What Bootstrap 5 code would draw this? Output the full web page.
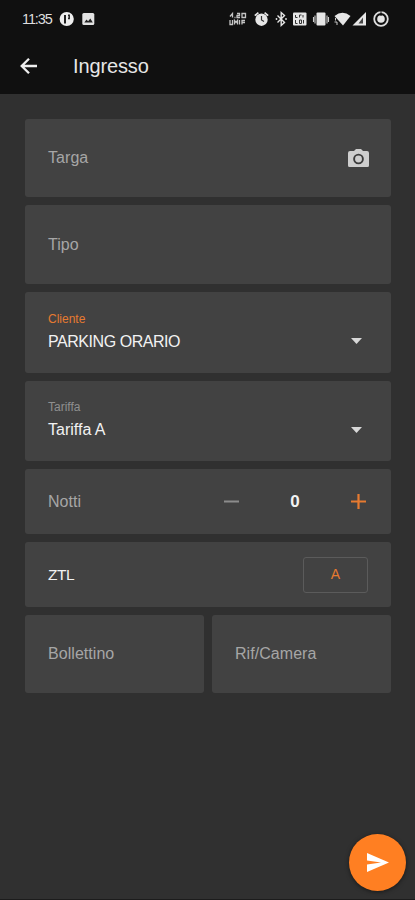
<!DOCTYPE html>
<html lang="it">
<head>
<meta charset="utf-8">
<meta name="viewport" content="width=device-width, initial-scale=1">
<title>Ingresso</title>
<link href="https://cdn.jsdelivr.net/npm/bootstrap@5.3.0/dist/css/bootstrap.min.css" rel="stylesheet">
<style>
  body { background: #303030; color: #f2f2f2; font-family: "Liberation Sans", Arial, sans-serif; font-size: 16px; line-height: 20px; height: 900px; overflow: hidden; border-bottom: 1px solid #1c1c1c; }
  svg { display: block; flex: none; }
  .topbar { background: #101010; height: 94px; }
  .status { height: 38px; padding: 0 26px 0 22px; }
  .clock { font-size: 14.5px; letter-spacing: -1.1px; width: 37px; color: #dedede; }
  .appbar { height: 56px; padding-left: 17px; }
  .title { font-size: 20px; line-height: 24px; letter-spacing: -.12px; margin-left: 32px; color: #e6e6e6; }
  .form-area { padding: 25px 24px 0 25px; gap: 8px; }
  .tile { background: #424242; border-radius: 3px; padding: 0 23px; }
  .h-a { height: 78px; } .h-b { height: 79px; } .h-c { height: 81px; } .h-d { height: 80px; } .h-e { height: 65px; }
  .hint { color: #a6a6a6; letter-spacing: .05px; }
  .caption { font-size: 12px; line-height: 16px; color: #8f8f8f; letter-spacing: 0; }
  .accent { color: #e67a30; }
  .value { letter-spacing: -.45px; line-height: 20px; margin: 5px 0 3px; }
  .value-wide { letter-spacing: 0; }
  .arrow { margin-right: 6px; margin-top: 17px; }
  .stepper { width: 144px; padding-right: 2px; }
  .camera { margin-right: -1px; }
  .zero { font-size: 17px; }
  .ztl { font-size: 15.5px; letter-spacing: -.5px; }
  .btn-zone { width: 65px; height: 36px; padding: 0; border: 1px solid #5b5b5b; border-radius: 3px; font-size: 14px; color: #e67a30; }
  .fab { width: 57px; height: 57px; right: 9px; bottom: 8px; background: #ff7f22; box-shadow: 0 1px 4px rgba(0,0,0,.5); padding: 0; border: 0; }
</style>
</head>
<body class="position-relative">
<header class="topbar">
  <div class="status d-flex align-items-center">
    <span class="clock">11:35</span>
    <svg width="15" height="16" viewBox="0 0 15 16"><circle cx="7.7" cy="8" r="7.1" fill="#eee"/><path d="M6 12.500V4" stroke="#222" stroke-width="2"/><path d="M9 4.200h1.200v3.300H9" fill="none" stroke="#222" stroke-width="1.500"/></svg>
    <svg class="ms-2" width="13" height="14" viewBox="0 0 13 14"><rect x=".3" y="1" width="12" height="12" rx="1.5" fill="#e2e2e2"/><path d="M2.3 10.5 4.5 7.5l1.6 1.8L8.3 6.5l2.5 4z" fill="#222"/></svg>
    <svg class="ms-auto" width="160" height="18" viewBox="229 10 160 18" fill="#e6e6e6">
      <g fill="none" stroke="#c4c4c4" stroke-width="1.3"><path d="M230 16.5l2.500-3v4M234.500 17.500h1M237 13.500h2.500v2h-2.500v2h3M242 13.500h3.500v4h-3.500zM230 20v4.500h2.500V20M234.500 24.500v-4l1.500 2 1.500-2v4M239.500 20v4.500M242 24.500v-4h3M242 22.500h3"/></g>
      <circle cx="261.500" cy="19.700" r="6.200"/><path d="M254.800 15.600l3.600-3M268.200 15.600l-3.600-3" stroke="#e6e6e6" stroke-width="1.7"/><path d="M261.500 16v4l2.500 1.500" fill="none" stroke="#333" stroke-width="1.200"/>
      <path d="M277.500 15.500l7 7-3.300 3V12.500l3.300 3-7 7" fill="none" stroke="#e6e6e6" stroke-width="1.400"/><circle cx="276.500" cy="19" r=".9"/><circle cx="286" cy="19" r=".9"/>
      <rect x="293" y="12.500" width="13.500" height="13" rx="1"/><path d="M295.500 15v2.500h2M299.500 17.500V15h2M303 15v2.500M295.500 20v3.500h2M299.500 20h2v3.500h-2zM303.500 20v3.500" fill="none" stroke="#333"/>
      <rect x="316.500" y="12.500" width="9" height="13" rx="1"/><path d="M315 15.500v8M327 15.500v8M313.500 17v5M328.500 17v5" stroke="#ccc" stroke-width="1.100"/>
      <path d="M334.500 16q8-6.500 16 0L343 25.500z"/><path d="M335.500 18v2.500M334.500 22h2.500v3" stroke="#ccc" fill="none"/>
      <path d="M352.500 25.500L366 12v13.500z"/><path d="M363 17.500v6h-4.500z" fill="#444"/>
      <circle cx="381" cy="19" r="6.800" fill="none" stroke="#dedede" stroke-width="1.800"/><circle cx="381" cy="19" r="3.800"/><path d="M381 11v5" stroke="#101010"/>
    </svg>
  </div>
  <div class="appbar d-flex align-items-center">
    <svg width="24" height="24" viewBox="0 0 24 24" fill="none" stroke="#eee" stroke-width="2.300"><path d="M20 12H5M12 4.700L4.700 12l7.300 7.300"/></svg>
    <h1 class="title mb-0 fw-normal">Ingresso</h1>
  </div>
</header>
<main class="form-area d-flex flex-column">
  <div class="tile h-a d-flex align-items-center justify-content-between">
    <span class="hint">Targa</span>
    <svg class="camera" width="21" height="20" viewBox="0 0 21 20"><path d="M2 3h4l2-2h5l2 2h4q2 0 2 2v12.500q0 1.500-1.500 1.500H1.500Q0 19 0 17.500V5q0-2 2-2z" fill="#cecece"/><circle cx="10.500" cy="11" r="4.400" fill="none" stroke="#3b3b3b" stroke-width="1.900"/></svg>
  </div>
  <div class="tile h-b d-flex align-items-center"><span class="hint">Tipo</span></div>
  <div class="tile h-c d-flex align-items-center justify-content-between">
    <div><div class="caption accent">Cliente</div><div class="value">PARKING ORARIO</div></div>
    <svg class="arrow" width="11" height="6" viewBox="0 0 11 6"><path d="M0 0h11L5.500 6z" fill="#d8d8d8"/></svg>
  </div>
  <div class="tile h-d d-flex align-items-center justify-content-between">
    <div><div class="caption">Tariffa</div><div class="value value-wide">Tariffa A</div></div>
    <svg class="arrow" width="11" height="6" viewBox="0 0 11 6"><path d="M0 0h11L5.500 6z" fill="#d8d8d8"/></svg>
  </div>
  <div class="tile h-e d-flex align-items-center justify-content-between">
    <span class="hint">Notti</span>
    <div class="stepper d-flex align-items-center justify-content-between">
      <svg width="15" height="15" viewBox="0 0 15 15"><path d="M0 7.500h15" stroke="#8c8c8c" stroke-width="2"/></svg>
      <strong class="zero">0</strong>
      <svg width="15" height="15" viewBox="0 0 15 15"><path d="M0 7.500h15M7.500 0v15" stroke="#e67a30" stroke-width="2.200"/></svg>
    </div>
  </div>
  <div class="tile h-e d-flex align-items-center justify-content-between">
    <span class="ztl">ZTL</span>
    <button class="btn btn-zone" type="button">A</button>
  </div>
  <div class="d-flex gap-2">
    <div class="tile h-a flex-fill w-50 d-flex align-items-center"><span class="hint">Bollettino</span></div>
    <div class="tile h-a flex-fill w-50 d-flex align-items-center"><span class="hint">Rif/Camera</span></div>
  </div>
</main>
<button class="fab btn rounded-circle position-absolute d-flex align-items-center justify-content-center" type="button" aria-label="Invia">
  <svg width="22" height="19" viewBox="0 0 22 19"><path d="M0 0l22 9.500L0 19v-7.500l14-2-14-2z" fill="#fff"/></svg>
</button>
<script src="https://cdn.jsdelivr.net/npm/bootstrap@5.3.0/dist/js/bootstrap.bundle.min.js"></script>
</body>
</html>
